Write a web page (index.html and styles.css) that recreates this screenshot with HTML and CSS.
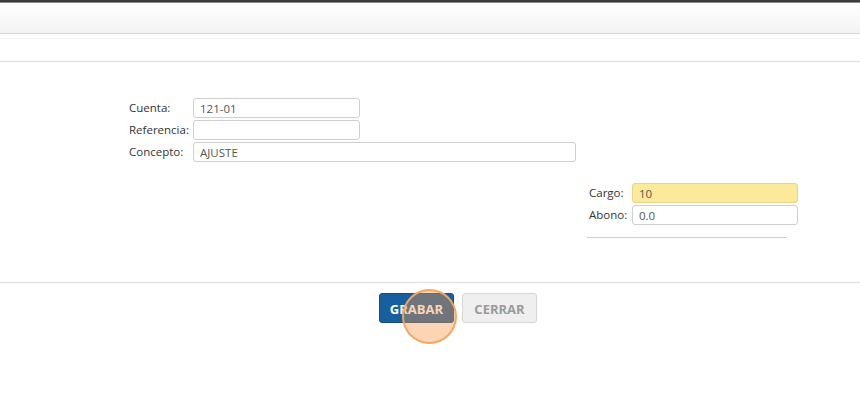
FILE: index.html
```html
<!DOCTYPE html>
<html lang="es">
<head>
<meta charset="utf-8">
<title>Asiento</title>
<link rel="stylesheet" href="styles.css">
</head>
<body>
<div class="topbar"></div>
<div class="header"></div>
<div class="subbar"><div class="subline"></div></div>
<div class="content">
  <div class="form">
    <label class="lbl">Cuenta:</label>
    <input class="inp short" type="text" value="121-01">
    <label class="lbl">Referencia:</label>
    <input class="inp short" type="text" value="">
    <label class="lbl">Concepto:</label>
    <input class="inp long" type="text" value="AJUSTE">
  </div>
  <div class="amounts">
    <div class="amount-grid">
      <label class="lbl">Cargo:</label>
      <input class="inp amt hl" type="text" value="10">
      <label class="lbl">Abono:</label>
      <input class="inp amt" type="text" value="0.0">
    </div>
    <div class="total-line"></div>
  </div>
</div>
<div class="footer">
  <button class="btn primary">GRABAR</button>
  <button class="btn secondary">CERRAR</button>
  <span class="click-mark"></span>
</div>
</body>
</html>
```
FILE: styles.css
```css
* { box-sizing: border-box; }
html, body { margin: 0; padding: 0; background: #fff; }
body {
  font-family: "Open Sans", "Liberation Sans", sans-serif;
  font-size: 11.5px;
  color: #333;
  width: 860px;
  height: 417px;
  overflow: hidden;
}
.topbar { height: 3px; background: #3c3c3c; border-bottom: 1px solid #8a8a8a; }
.header {
  height: 31px;
  background: linear-gradient(#ffffff, #f3f3f3);
  border-bottom: 1px solid #d8d8d8;
}
.subbar {
  height: 28px;
  border-bottom: 1px solid #dcdcdc;
  padding-top: 4px;
}
.subline { height: 1px; background: #f6f6f6; }
.content {
  height: 221px;
  border-bottom: 1px solid #dcdcdc;
  padding-top: 36px;
}
.form {
  display: grid;
  grid-template-columns: 64px auto;
  row-gap: 2px;
  margin-left: 129px;
  justify-items: start;
  align-items: center;
}
.lbl { line-height: 20px; white-space: nowrap; }
.inp {
  font-family: "Open Sans", "Liberation Sans", sans-serif;
  font-size: 11.5px;
  color: #555;
  height: 20px;
  border: 1px solid #cfcfcf;
  border-radius: 3px;
  padding: 0 6px;
  background: #fff;
  outline: none;
}
.short { width: 167px; }
.long { width: 383px; }
.amounts {
  margin-top: 21px;
  margin-left: 587px;
  width: 211px;
}
.amount-grid {
  display: grid;
  grid-template-columns: 43px auto;
  row-gap: 2px;
  align-items: center;
  padding-left: 2px;
}
.amt { width: 166px; }
.hl { background: #fce99a; border-color: #e8d48a; }
.total-line {
  margin-top: 12px;
  width: 200px;
  height: 1px;
  background: #cfcfcf;
}
.footer {
  position: relative;
  display: flex;
  gap: 8px;
  padding-top: 10px;
  padding-left: 379px;
}
.btn {
  font-family: "Open Sans", "Liberation Sans", sans-serif;
  font-weight: bold;
  font-size: 13px;
  height: 30px;
  width: 75px;
  border-radius: 3px;
  padding: 2px 0 0;
}
.primary { background: #175f9e; border: 1px solid #11507f; color: #fff; }
.secondary { background: #efefef; border: 1px solid #d5d5d5; color: #9a9a9a; }
.click-mark {
  position: absolute;
  left: 402px;
  top: 6px;
  width: 55px;
  height: 55px;
  border-radius: 50%;
  background: rgba(245, 150, 70, 0.4);
  border: 2px solid rgba(245, 165, 95, 0.95);
}
```
